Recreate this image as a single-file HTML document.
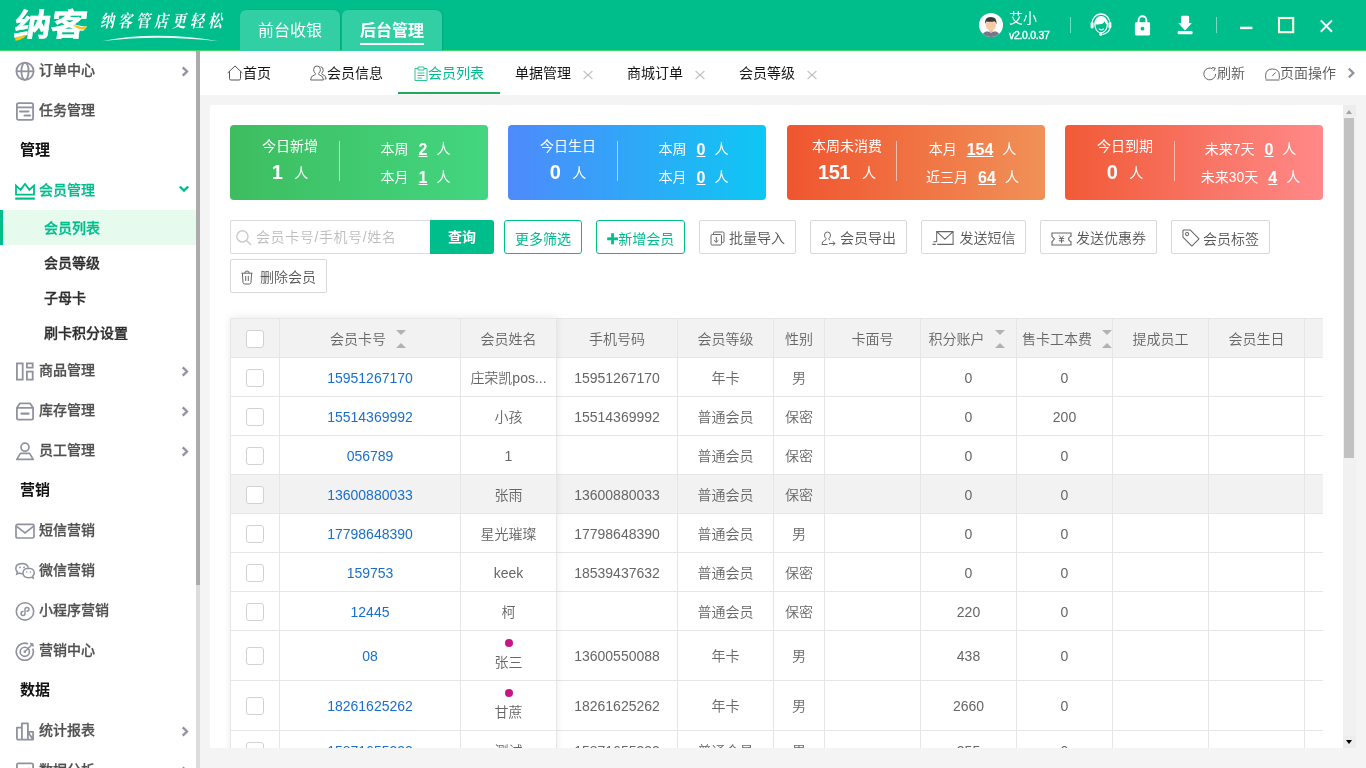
<!DOCTYPE html>
<html lang="zh-CN">
<head>
<meta charset="utf-8">
<title>纳客 - 会员列表</title>
<style>
*{box-sizing:border-box;margin:0;padding:0}
body{will-change:transform}
html,body{width:1366px;height:768px;overflow:hidden;background:#f4f4f4;font-family:"Liberation Sans","Noto Sans CJK SC",sans-serif;font-size:14px;color:#333;font-weight:350}
body{position:relative}
svg{display:block}
/* ---------- header ---------- */
#hd{z-index:5;position:absolute;left:0;top:0;width:1366px;height:51px;background:#00be8c;border-bottom:1px solid #45d86c}
#logo{position:absolute;left:12px;top:7px;font-size:31.5px;font-weight:700;color:#fff;letter-spacing:-.5px;line-height:36px;font-family:"Liberation Sans","Noto Sans CJK SC",sans-serif;transform-origin:0 100%;transform:skewX(-8deg) scaleX(1.17);white-space:nowrap;-webkit-text-stroke:.5px #fff}
#slogan{position:absolute;left:101px;top:10px;font-size:14px;color:#fff;font-family:"Liberation Serif","Noto Serif CJK SC",serif;letter-spacing:4px;line-height:24px;font-weight:700;white-space:nowrap;transform-origin:0 50%;transform:skewX(-12deg) scaleY(1.22)}
.htab{position:absolute;top:10px;height:41px;width:100px;background:#32cfa4;border-radius:6px 6px 0 0;color:#fff;font-size:16px;text-align:center;line-height:42px;font-weight:400;box-shadow:1px 0 2px rgba(0,0,0,.12)}
.htab.on{font-weight:bold}
.htab.on i{position:absolute;left:18px;right:18px;bottom:6px;height:2px;background:#fff}
#uname{position:absolute;left:1009px;top:9px;color:#fff;font-size:14px;line-height:18px;font-weight:400}
#uver{position:absolute;left:1009px;top:29px;color:#fff;font-size:10.5px;line-height:12px;letter-spacing:-.3px;font-weight:400;-webkit-text-stroke:.35px #fff}
.vsep{position:absolute;top:17px;width:1px;height:16px;background:rgba(255,255,255,.45)}
/* ---------- sidebar ---------- */
#sb{position:absolute;left:0;top:50px;width:196px;height:718px;background:#fff;overflow:hidden}
#sbbar{position:absolute;left:196px;top:51px;width:4px;height:717px;background:#dcdcdc}
#sbbar i{position:absolute;left:0;top:0;width:4px;height:534px;background:#ababab}
.mi{position:relative;height:40px;line-height:40px;padding-left:39px;font-weight:500;color:#505050;font-size:14px;-webkit-text-stroke:.25px}
.mi svg{position:absolute;left:15px;top:11px}
.mi .arr{position:absolute;left:auto;right:7px;top:16px}
.mi.on{color:#00be8c}
.sec{height:40px;line-height:40px;padding-left:20px;font-weight:bold;color:#111;font-size:15px}
.smi{height:35px;line-height:37px;padding-left:44px;font-weight:500;-webkit-text-stroke:.3px;color:#2e2e2e;font-size:14px;position:relative}
.smi.on{color:#00be8c;background:#e6fbee}
.smi.on:before{content:"";position:absolute;left:0;top:0;width:3px;height:100%;background:#00be8c}
/* ---------- page tabs ---------- */
#tb{position:absolute;left:200px;top:51px;width:1166px;height:44px;background:#fff}
.pt{position:absolute;top:0;height:44px;line-height:45px;font-size:14px;color:#151515;white-space:nowrap;font-weight:400}
.pt svg{display:inline-block;vertical-align:-2.5px}
.pt.on{color:#00be8c}
.pt.gr{color:#555;font-weight:350}
.pt .xx{margin-left:12px;vertical-align:-2px}
#tbline{position:absolute;left:198px;top:41px;width:102px;height:2px;background:#1fa95c}
/* ---------- main ---------- */
#pn{position:absolute;left:210px;top:105px;width:1133px;height:643px;background:#fff;border-radius:2px 0 0 2px;overflow:hidden}
#vs{position:absolute;left:1343px;top:105px;width:13px;height:643px;background:#f1f1f1}
#vs i{position:absolute;left:1px;top:13px;width:10px;height:340px;background:#c1c1c1}
#vs b{position:absolute;left:0;width:13px;height:12px;background:#ededed}
#vs b:after{content:"";position:absolute;left:3px;border:3.5px solid transparent}
#vs b.u{top:0}
#vs b.u:after{top:1.5px;border-bottom:4px solid #a3a3a3;border-top-width:0;top:5px}
#vs b.d{bottom:0}
#vs b.d:after{top:4px;border-top:4.5px solid #000;border-bottom-width:0}
.card{position:absolute;top:20px;width:258px;height:75px;border-radius:4px;color:#fff;font-weight:400}
.card .l{position:absolute;left:0;top:0;width:110px;text-align:center}
.card .l .t{position:absolute;left:0;top:11px;width:120px;font-size:14px;line-height:20px}
.card .l .n{position:absolute;left:0;top:34px;width:120px;font-size:14px;line-height:26px;white-space:nowrap}
.card .l .n b{font-size:20px;margin-right:12px;vertical-align:-1px;letter-spacing:-.5px}
.card .sp{position:absolute;left:109px;top:16px;width:1px;height:40px;background:rgba(255,255,255,.55)}
.card .r{position:absolute;left:111.5px;top:1px;width:148px;text-align:center;font-size:14px}
.card .r div{position:absolute;left:0;width:148px;line-height:20px;white-space:nowrap}
.card .r b{font-size:16px;text-decoration:underline;margin:0 9px 0 10px;vertical-align:-.5px}
/* toolbar */
.btn{position:absolute;height:34px;border:1px solid #d9d9d9;border-radius:2px;background:#fff;color:#555;font-size:14px;line-height:35px;white-space:nowrap;text-align:center}
.btn svg{display:inline-block;vertical-align:-3px;margin-right:4px}
.btn.g{border-color:#00be8c;color:#00be8c;border-radius:3px;font-weight:400;line-height:36px}
#sch{position:absolute;left:20px;top:115px;width:201px;height:34px;border:1px solid #dcdcdc;border-right:0;border-radius:2px 0 0 2px;background:#fff;color:#bdbdbd;font-size:14px;line-height:32px}
#sch svg{position:absolute;left:4px;top:8px}
#sch span{position:absolute;left:25px;top:0;white-space:nowrap;letter-spacing:.6px}
#qry{position:absolute;left:220px;top:115px;width:64px;height:34px;background:#00be8c;color:#fff;font-weight:bold;font-size:14px;text-align:center;line-height:35px;border-radius:0 3px 3px 0}
.plus{font-size:20px;line-height:1;vertical-align:-2px;font-weight:bold;-webkit-text-stroke:.7px #00be8c}
/* table */
#tbl{position:absolute;left:20px;top:213px;width:1093px;height:430px;overflow:hidden;border-left:1px solid #e6e6e6;border-top:1px solid #e6e6e6}
.tr{position:relative;height:39px;border-bottom:1px solid #e6e6e6;white-space:nowrap;width:1200px;background:#fff}
.tr.h{background:#f2f2f2}
.tr.hv{background:#f2f2f2}
.tr.t2{height:50px}
.td{position:absolute;top:0;height:100%;border-right:1px solid #e6e6e6;text-align:center;line-height:40px;color:#666;font-size:14px;overflow:hidden}
.tr.t2 .td{line-height:51px}
.td a{color:#1b6fcc;text-decoration:none}
.cb{position:absolute;left:15px;top:11px;width:18px;height:18px;border:1px solid #d2d2d2;border-radius:3px;background:#fff}
.tr.t2 .cb{top:16px}
.srt{display:inline-block;position:relative;width:10px;height:20px;margin-left:10px;vertical-align:-5px}
.srt:before{content:"";position:absolute;left:0;top:1px;border:5px solid transparent;border-top-color:#b2b2b2;border-bottom-width:0}
.srt:after{content:"";position:absolute;left:0;top:14px;border:5px solid transparent;border-bottom-color:#b2b2b2;border-top-width:0}
.nm2{position:absolute;left:0;top:21px;width:100%;line-height:20px}
#fxs{position:absolute;left:20px;top:213px;width:327px;height:440px;box-shadow:0 -1px 8px rgba(0,0,0,.08);pointer-events:none}
.dot{position:absolute;left:50%;margin-left:-4px;top:8px;width:8px;height:8px;border-radius:50%;background:#c71585}
</style>
</head>
<body>
<!-- HEADER -->
<div id="hd">
  <div id="logo">纳客</div>
  <div id="slogan">纳客管店更轻松</div>
  <div class="htab" style="left:240px">前台收银</div>
  <div class="htab on" style="left:342px">后台管理<i></i></div>

  <svg id="logoacc" style="position:absolute;left:12px;top:7px" width="80" height="38" viewBox="0 0 80 38"><path d="M3 30.5Q7 30.5 13.6 27.6L12.4 30.6Q7.6 33.6 3.6 33.8Z" fill="#ffc20e"/><path d="M60.6 18.2Q65 17.8 69.4 20.2L74 19L73.4 22.6Q68 23.4 60.6 18.2Z" fill="#ffc20e"/></svg>
  <svg id="swoosh" style="position:absolute;left:100px;top:33px" width="130" height="10" viewBox="0 0 130 10"><path d="M2.5 8Q55 -2.6 119 8.2Q58 1.2 2.5 8Z" fill="#fff" opacity=".95"/></svg>
  <svg style="position:absolute;left:979px;top:13px" width="24" height="24" viewBox="0 0 24 24"><defs><clipPath id="avc"><circle cx="12" cy="12" r="12"/></clipPath></defs><circle cx="12" cy="12" r="12" fill="#fff"/><g clip-path="url(#avc)"><path d="M3.2 24Q3.4 19 8 18.2L12 19.4L16 18.2Q20.6 19 20.8 24Z" fill="#77778b"/><path d="M10 16H14V18.6L12 19.8L10 18.6Z" fill="#f2bd97"/><ellipse cx="11.9" cy="11.8" rx="5" ry="5.9" fill="#f7caa6"/><path d="M6.3 11.4Q5.4 6.6 8.4 4.8Q11 3.2 14.6 4.4Q17.8 5.4 17.5 11.4Q16.8 9.2 15.6 8.2Q11.4 9.4 7.4 8.4Q6.6 9.4 6.3 11.4Z" fill="#3a3a3c"/></g></svg>
  <svg style="position:absolute;left:1089px;top:12px" width="24" height="26" viewBox="0 0 24 26" fill="none" stroke="#fff"><path d="M2.7 12.8A9.3 10.8 0 0 1 21.3 12.8" stroke-width="1.3"/><rect x="1.6" y="10.2" width="3" height="6.2" rx="1.3" fill="#fff" stroke="none"/><rect x="19.4" y="10.2" width="3" height="6.2" rx="1.3" fill="#fff" stroke="none"/><path d="M5.2 12A6.9 7.9 0 0 1 19 12C19 17 16 21.3 12.1 21.3C8.2 21.3 5.2 17 5.2 12Z" fill="#fff" stroke="none"/><path d="M6.5 12.4Q9.5 13 13.2 11.8Q14.6 11.2 15.4 9.2Q16.4 11.6 17.7 12.8C17.7 16.8 15.4 20.2 12.1 20.2C8.8 20.2 6.5 16.8 6.5 12.4Z" fill="#00be8c" stroke="none"/><path d="M10.3 17.1Q12.3 18.6 14.5 17.1" stroke-width="1.2" stroke-linecap="round"/><path d="M21 16.2Q19.8 21.2 13.6 22.4" stroke-width="1.2"/><circle cx="11.7" cy="22.3" r="1.6" fill="#fff" stroke="none"/></svg>
  <svg style="position:absolute;left:1133px;top:14px" width="19" height="23" viewBox="0 0 19 23"><path d="M5.6 9V6.2A3.9 3.9 0 0 1 13.4 6.2V9" fill="none" stroke="#fff" stroke-width="1.9"/><path d="M3.2 8.3H15.8Q17.1 8.3 17.1 9.6V20.1Q17.1 21.4 15.8 21.4H3.2Q1.9 21.4 1.9 20.1V9.6Q1.9 8.3 3.2 8.3ZM9.5 12.8A1.9 1.9 0 1 0 9.5 16.6A1.9 1.9 0 1 0 9.5 12.8Z" fill="#fff" fill-rule="evenodd"/></svg>
  <svg style="position:absolute;left:1176px;top:14px" width="18" height="22" viewBox="0 0 18 22" fill="#fff"><path d="M5.1 3Q5.1 1.8 6.3 1.8H11.9Q13.1 1.8 13.1 3V9.1H15.9L9.1 16.6L2.2 9.1H5.1Z"/><rect x="1.6" y="17" width="15" height="3.3" rx="1.2"/></svg>
  <svg style="position:absolute;left:1238px;top:16px" width="100" height="20" viewBox="0 0 100 20"><rect x="2" y="10.7" width="12.4" height="2.4" fill="#fff"/><rect x="41" y="2" width="14.2" height="14.2" fill="none" stroke="#ffffe0" stroke-width="2.1"/><path d="M82.8 4.4L94 15.8M94 4.4L82.8 15.8" stroke="#fff" stroke-width="2" fill="none"/></svg>
  <div id="uname">艾小</div>
  <div id="uver">v2.0.0.37</div>
  <div class="vsep" style="left:1070px"></div>
  <div class="vsep" style="left:1216px"></div>
</div>
<!-- SIDEBAR -->
<div id="sb">
  <div class="mi"><svg width="20" height="20" viewBox="0 0 20 20" fill="none" stroke="#9192a0" stroke-width="1.8"><circle cx="10" cy="10.3" r="8.6"/><ellipse cx="10" cy="10.3" rx="3.6" ry="8.6"/><path d="M1.4 10.3H18.6"/></svg><svg class="arr" width="8" height="11" viewBox="0 0 8 11" fill="none" stroke="#9192a0" stroke-width="2.3"><path d="M1.7 1.4L6 5.5L1.7 9.6"/></svg>订单中心</div>
  <div class="mi"><svg width="20" height="20" viewBox="0 0 20 20" fill="none" stroke="#9192a0" stroke-width="1.8"><rect x="1.9" y="2.2" width="16.2" height="16.6" rx="1.6"/><path d="M1.9 6.4H18.1"/><path d="M5 10.6H13.5M9.5 14.6H15" stroke-width="2" stroke-linecap="round"/></svg>任务管理</div>
  <div class="sec">管理</div>
  <div class="mi on"><svg width="20" height="20" viewBox="0 0 20 20" fill="none" stroke="#00be8c" stroke-width="1.8"><path d="M1 4.6L5.6 8.8L10 3L14.4 8.8L19 4.6V13.6H1Z" stroke-linejoin="miter"/><path d="M0.2 17.6H19.8" stroke-width="2.2"/></svg><svg class="arr" style="right:6px;top:15px" width="12" height="8" viewBox="0 0 12 8" fill="none" stroke="#00be8c" stroke-width="2.4"><path d="M1.8 1.5L6 5.6L10.2 1.5"/></svg>会员管理</div>
  <div class="smi on">会员列表</div>
  <div class="smi">会员等级</div>
  <div class="smi">子母卡</div>
  <div class="smi">刷卡积分设置</div>
  <div class="mi"><svg width="20" height="20" viewBox="0 0 20 20" fill="none" stroke="#9192a0" stroke-width="1.8"><rect x="1.9" y="2.4" width="5.8" height="16.2"/><rect x="11.9" y="2.4" width="5.8" height="4.2"/><rect x="11.9" y="10.6" width="5.8" height="8"/></svg><svg class="arr" width="8" height="11" viewBox="0 0 8 11" fill="none" stroke="#9192a0" stroke-width="2.3"><path d="M1.7 1.4L6 5.5L1.7 9.6"/></svg>商品管理</div>
  <div class="mi"><svg width="20" height="20" viewBox="0 0 20 20" fill="none" stroke="#9192a0" stroke-width="1.8"><path d="M5 2.3H15L18.1 6.8V17Q18.1 18.6 16.5 18.6H3.5Q1.9 18.6 1.9 17V6.8ZM1.9 6.8H18.1" stroke-linejoin="round"/><path d="M6.4 12.6H13.6" stroke-width="2.2" stroke-linecap="round"/></svg><svg class="arr" width="8" height="11" viewBox="0 0 8 11" fill="none" stroke="#9192a0" stroke-width="2.3"><path d="M1.7 1.4L6 5.5L1.7 9.6"/></svg>库存管理</div>
  <div class="mi"><svg width="20" height="20" viewBox="0 0 20 20" fill="none" stroke="#9192a0" stroke-width="1.7"><circle cx="10" cy="6.2" r="4"/><path d="M5.4 12.4H14.6L18.2 18.4H1.8Z" stroke-linejoin="round"/></svg><svg class="arr" width="8" height="11" viewBox="0 0 8 11" fill="none" stroke="#9192a0" stroke-width="2.3"><path d="M1.7 1.4L6 5.5L1.7 9.6"/></svg>员工管理</div>
  <div class="sec">营销</div>
  <div class="mi"><svg width="20" height="20" viewBox="0 0 20 20" fill="none" stroke="#9192a0" stroke-width="1.7"><rect x="1" y="3.4" width="18" height="13.6" rx="1.6"/><path d="M1.6 5.4L10 12L18.4 5.4"/></svg>短信营销</div>
  <div class="mi"><svg width="20" height="20" viewBox="0 0 20 20" fill="none" stroke="#9192a0" stroke-width="1.8"><path d="M8 12.6Q5.6 12.8 4.2 12L1.8 13.2L2.4 10.8Q0.8 9.2 0.8 7.4Q0.8 3 7 2.6Q12.4 2.8 13.2 6.6" stroke-width="1.5"/><path d="M13.6 7.2Q19.2 7.4 19.2 12Q19.2 13.8 17.8 15L18.2 17L16.2 16.2Q15 16.8 13.6 16.8Q8 16.6 8 12Q8 7.4 13.6 7.2Z" stroke-width="1.5"/><circle cx="5" cy="6.4" r=".9" fill="#9192a0" stroke="none"/><circle cx="9" cy="6.4" r=".9" fill="#9192a0" stroke="none"/><circle cx="11.8" cy="11" r=".8" fill="#9192a0" stroke="none"/><circle cx="15.4" cy="11" r=".8" fill="#9192a0" stroke="none"/></svg>微信营销</div>
  <div class="mi"><svg width="20" height="20" viewBox="0 0 20 20" fill="none" stroke="#9192a0" stroke-width="1.8"><circle cx="10" cy="10.4" r="8.7" stroke-width="1.6"/><path d="M10 12.4Q10 14.4 8 14.4Q6 14.4 6 12.6Q6 10.8 8 10.6M10 12.4V8.4Q10 6.4 12 6.4Q14 6.4 14 8.2Q14 10 12 10.2" stroke-width="1.5" stroke-linecap="round"/></svg>小程序营销</div>
  <div class="mi"><svg width="20" height="20" viewBox="0 0 20 20" fill="none" stroke="#9192a0" stroke-width="1.7"><path d="M17.6 7.6Q18.4 9 18.4 10.8A8.6 8.6 0 1 1 9.8 2.2Q11.6 2.2 13 3"/><circle cx="9.8" cy="10.8" r="4.6" stroke-width="1.6"/><circle cx="9.8" cy="10.8" r="1.3" fill="#9192a0" stroke="none"/><path d="M9.8 10.8L17.4 3.2M15 2.4L17.6 3L18.2 5.6" stroke-width="1.5"/></svg>营销中心</div>
  <div class="sec">数据</div>
  <div class="mi"><svg width="20" height="20" viewBox="0 0 20 20" fill="none" stroke="#9192a0" stroke-width="1.8"><path d="M1.9 18.6V6.6H6.9M6.9 18.6V2.4H12.9V18.6M12.9 10.9H18.1V18.6ZM1.9 18.6H18.1" stroke-linejoin="round"/></svg><svg class="arr" width="8" height="11" viewBox="0 0 8 11" fill="none" stroke="#9192a0" stroke-width="2.3"><path d="M1.7 1.4L6 5.5L1.7 9.6"/></svg>统计报表</div>
  <div class="mi"><svg width="20" height="20" viewBox="0 0 20 20" fill="none" stroke="#9192a0" stroke-width="1.8"><rect x="1.9" y="2.4" width="16.2" height="14" rx="1.4"/><path d="M5.6 12L8.6 8.6L11.4 11L14.6 7"/></svg><svg class="arr" width="8" height="11" viewBox="0 0 8 11" fill="none" stroke="#9192a0" stroke-width="2.3"><path d="M1.7 1.4L6 5.5L1.7 9.6"/></svg>数据分析</div>
</div>
<div id="sbbar"><i></i></div>
<!-- PAGE TABS -->
<div id="tb">
  <div class="pt" style="left:27px"><svg width="16" height="16" viewBox="0 0 16 16" fill="none" stroke="#555" stroke-width="1"><path d="M0.6 8L8 1L15.4 8M2.5 6.4V13.6Q2.5 15 3.9 15H12.1Q13.5 15 13.5 13.6V6.4"/></svg>首页</div>
  <div class="pt" style="left:110px"><svg width="17" height="16" viewBox="0 0 17 16" fill="none" stroke="#666" stroke-width="1"><path d="M5.6 8.6Q3.6 7.2 3.6 4.6Q3.6 1 7 1Q10.4 1 10.4 4.6Q10.4 7.2 8.4 8.6Q8.4 9.8 10 10.2Q13.4 11 13.4 15H0.6Q0.6 11 4 10.2Q5.6 9.8 5.6 8.6Z"/><path d="M10.6 1.6Q13.4 2 13.2 5.4Q13 7.4 11.6 8.4Q11.8 9.4 13 9.8Q16 10.6 16.2 14H14.6"/></svg>会员信息</div>
  <div class="pt on" style="left:214px"><svg width="14" height="15" viewBox="0 0 14 15" fill="none" stroke="#2fc592" stroke-width="1"><path d="M4 2.5H1V14.5H13V2.5H10M4 1H10V4H4ZM3.5 7H10.5M3.5 9.5H10.5M3.5 12H8"/></svg>会员列表</div>
  <div class="pt" style="left:315px">单据管理<svg class="xx" width="10" height="10" viewBox="0 0 10 10" fill="none" stroke="#c2c2c2" stroke-width="1.1"><path d="M0.6 1L9.4 9M9.4 1L0.6 9"/></svg></div>
  <div class="pt" style="left:427px">商城订单<svg class="xx" width="10" height="10" viewBox="0 0 10 10" fill="none" stroke="#c2c2c2" stroke-width="1.1"><path d="M0.6 1L9.4 9M9.4 1L0.6 9"/></svg></div>
  <div class="pt" style="left:539px">会员等级<svg class="xx" width="10" height="10" viewBox="0 0 10 10" fill="none" stroke="#c2c2c2" stroke-width="1.1"><path d="M0.6 1L9.4 9M9.4 1L0.6 9"/></svg></div>
  <div class="pt gr" style="left:1003px"><svg width="14" height="14" viewBox="0 0 14 14" fill="none" stroke="#666" stroke-width="1"><path d="M12.6 7A5.9 5.9 0 1 1 9.6 1.8M9.2 0.4L12.4 1.2L10.6 4"/></svg>刷新</div>
  <div class="pt gr" style="left:1065px"><svg width="15" height="13" viewBox="0 0 15 13" fill="none" stroke="#666" stroke-width="1"><path d="M1 11.2Q0.6 10 0.6 7.8Q0.6 1 7.5 1Q14.4 1 14.4 7.8Q14.4 10 14 11.2M0.6 12H14.4" /><path d="M7.2 8.2L10.6 4.4"/></svg>页面操作</div><div class="pt" style="left:1147px;top:16px;line-height:0"><svg width="9" height="12" viewBox="0 0 9 12" fill="none" stroke="#9192a0" stroke-width="2.2"><path d="M1.8 1.6L6.4 6L1.8 10.4"/></svg></div>
  <div id="tbline"></div>
</div>
<!-- MAIN PANEL -->
<div id="pn">
  <div id="cards">
<div class="card" style="left:20px;background:linear-gradient(90deg,#3ebd60,#43d680)"><div class="l"><div class="t">今日新增</div><div class="n"><b>1</b>人</div></div><div class="sp"></div><div class="r"><div style="top:13px">本周<b>2</b>人</div><div style="top:41px">本月<b>1</b>人</div></div></div>
<div class="card" style="left:298px;background:linear-gradient(90deg,#4e8afc,#0ec7f3)"><div class="l"><div class="t">今日生日</div><div class="n"><b>0</b>人</div></div><div class="sp"></div><div class="r"><div style="top:13px">本周<b>0</b>人</div><div style="top:41px">本月<b>0</b>人</div></div></div>
<div class="card" style="left:577px;background:linear-gradient(90deg,#f0552f,#f09158)"><div class="l"><div class="t">本周未消费</div><div class="n"><b>151</b>人</div></div><div class="sp"></div><div class="r"><div style="top:13px">本月<b>154</b>人</div><div style="top:41px">近三月<b>64</b>人</div></div></div>
<div class="card" style="left:855px;background:linear-gradient(90deg,#f15a36,#ff8989)"><div class="l"><div class="t">今日到期</div><div class="n"><b>0</b>人</div></div><div class="sp"></div><div class="r"><div style="top:13px">未来7天<b>0</b>人</div><div style="top:41px">未来30天<b>4</b>人</div></div></div>
</div><!--/cards-->
  <div id="tools">
  <div id="sch"><svg width="18" height="18" viewBox="0 0 18 18" fill="none" stroke="#c9c9c9" stroke-width="1.4"><circle cx="7.4" cy="7.4" r="5.6"/><path d="M11.4 11.4L15.6 15.6" stroke-linecap="round"/></svg><span>会员卡号/手机号/姓名</span></div>
  <div id="qry">查询</div>
  <div class="btn g" style="left:294px;top:115px;width:78px">更多筛选</div>
  <div class="btn g" style="left:386px;top:115px;width:89px"><b class="plus">+</b>新增会员</div>
  <div class="btn" style="left:489px;top:115px;width:97px"><svg width="15" height="15" viewBox="0 0 15 15" fill="none" stroke="#666" stroke-width="1"><path d="M3.5 3.5V2.2Q3.5 1 4.7 1H12.8Q14 1 14 2.2V10.3Q14 11.5 12.8 11.5H11.5"/><rect x="1" y="3.5" width="10.5" height="10.5" rx="1.2"/><path d="M6.25 6V11.2M4 9.2L6.25 11.4L8.5 9.2"/></svg>批量导入</div>
  <div class="btn" style="left:600px;top:115px;width:97px"><svg width="15" height="15" viewBox="0 0 15 15" fill="none" stroke="#666" stroke-width="1"><path d="M5.2 7.6Q3.5 6.4 3.5 4.2Q3.5 1 6.5 1Q9.5 1 9.5 4.2Q9.5 6.4 7.8 7.6Q7.6 8.6 9 9M5.2 7.6Q5.4 8.8 3.6 9.4Q1 10.3 1 13.5H6.5"/><path d="M8 12.5H14M11.8 10.3L14 12.5L11.8 14.7"/></svg>会员导出</div>
  <div class="btn" style="left:711px;top:115px;width:105px"><svg width="22.5" height="16" viewBox="0 0 24 15" preserveAspectRatio="none" fill="none" stroke="#666" stroke-width="1.1" style="margin-right:5.5px"><path d="M5 11V1.5H22.5V13.5H5.5M5 1.5L13.75 8.6L22.5 1.5M1.5 11H5M0.5 13.5H4"/></svg>发送短信</div>
  <div class="btn" style="left:830px;top:115px;width:117px"><svg width="21" height="14" viewBox="0 0 21 14" fill="none" stroke="#666" stroke-width="1.1"><path d="M1 1H20V4.3Q17.6 5 17.6 7Q17.6 9 20 9.7V13H1V9.7L3.4 7L1 4.3Z"/><path d="M8.3 3.6L10.5 6.4L12.7 3.6M7.8 6.6H13.2M7.8 8.8H13.2M10.5 6.4V11" stroke-width="1"/></svg>发送优惠券</div>
  <div class="btn" style="left:961px;top:115px;width:99px;line-height:37px"><svg width="18" height="18" viewBox="0 0 19 19" fill="none" stroke="#666" stroke-width="1.1" style="vertical-align:-3px;margin-right:3px"><path d="M1 2.2Q1 1 2.2 1H8.6L18 10.4L10.4 18L1 8.6Z" stroke-linejoin="round"/><circle cx="5.4" cy="5.4" r="1.7"/></svg>会员标签</div>
  <div class="btn" style="left:20px;top:154px;width:97px"><svg width="12" height="15" viewBox="0 0 12 15" fill="none" stroke="#666" stroke-width="1" style="margin-right:7px"><path d="M0.5 3.2H11.5M3.8 3.2Q3.8 1 6 1Q8.2 1 8.2 3.2M1.4 3.2L2 12.4Q2.2 14 3.8 14H8.2Q9.8 14 10 12.4L10.6 3.2M4.7 6V11M7.3 6V11"/></svg>删除会员</div>
</div>
  <div id="tbl">
<div class="tr h"><div class="td" style="left:0px;width:49px"><span class="cb"></span></div><div class="td" style="left:49px;width:181px;padding-right:4px">会员卡号<i class="srt"></i></div><div class="td" style="left:230px;width:96px">会员姓名</div><div class="td" style="left:326px;width:121px">手机号码</div><div class="td" style="left:447px;width:96px">会员等级</div><div class="td" style="left:543px;width:51px">性别</div><div class="td" style="left:594px;width:96px">卡面号</div><div class="td" style="left:690px;width:96px;padding-right:4px">积分账户<i class="srt"></i></div><div class="td" style="left:786px;width:96px;text-align:left;padding-left:5px">售卡工本费<i class="srt"></i></div><div class="td" style="left:882px;width:96px">提成员工</div><div class="td" style="left:978px;width:96px">会员生日</div><div class="td" style="left:1074px;width:96px"></div></div>
<div class="tr"><div class="td" style="left:0px;width:49px"><span class="cb"></span></div><div class="td" style="left:49px;width:181px"><a>15951267170</a></div><div class="td" style="left:230px;width:96px">庄荣凯pos...</div><div class="td" style="left:326px;width:121px">15951267170</div><div class="td" style="left:447px;width:96px">年卡</div><div class="td" style="left:543px;width:51px">男</div><div class="td" style="left:594px;width:96px"></div><div class="td" style="left:690px;width:96px">0</div><div class="td" style="left:786px;width:96px">0</div><div class="td" style="left:882px;width:96px"></div><div class="td" style="left:978px;width:96px"></div><div class="td" style="left:1074px;width:96px"></div></div>
<div class="tr"><div class="td" style="left:0px;width:49px"><span class="cb"></span></div><div class="td" style="left:49px;width:181px"><a>15514369992</a></div><div class="td" style="left:230px;width:96px">小孩</div><div class="td" style="left:326px;width:121px">15514369992</div><div class="td" style="left:447px;width:96px">普通会员</div><div class="td" style="left:543px;width:51px">保密</div><div class="td" style="left:594px;width:96px"></div><div class="td" style="left:690px;width:96px">0</div><div class="td" style="left:786px;width:96px">200</div><div class="td" style="left:882px;width:96px"></div><div class="td" style="left:978px;width:96px"></div><div class="td" style="left:1074px;width:96px"></div></div>
<div class="tr"><div class="td" style="left:0px;width:49px"><span class="cb"></span></div><div class="td" style="left:49px;width:181px"><a>056789</a></div><div class="td" style="left:230px;width:96px">1</div><div class="td" style="left:326px;width:121px"></div><div class="td" style="left:447px;width:96px">普通会员</div><div class="td" style="left:543px;width:51px">保密</div><div class="td" style="left:594px;width:96px"></div><div class="td" style="left:690px;width:96px">0</div><div class="td" style="left:786px;width:96px">0</div><div class="td" style="left:882px;width:96px"></div><div class="td" style="left:978px;width:96px"></div><div class="td" style="left:1074px;width:96px"></div></div>
<div class="tr hv"><div class="td" style="left:0px;width:49px"><span class="cb"></span></div><div class="td" style="left:49px;width:181px"><a>13600880033</a></div><div class="td" style="left:230px;width:96px">张雨</div><div class="td" style="left:326px;width:121px">13600880033</div><div class="td" style="left:447px;width:96px">普通会员</div><div class="td" style="left:543px;width:51px">保密</div><div class="td" style="left:594px;width:96px"></div><div class="td" style="left:690px;width:96px">0</div><div class="td" style="left:786px;width:96px">0</div><div class="td" style="left:882px;width:96px"></div><div class="td" style="left:978px;width:96px"></div><div class="td" style="left:1074px;width:96px"></div></div>
<div class="tr"><div class="td" style="left:0px;width:49px"><span class="cb"></span></div><div class="td" style="left:49px;width:181px"><a>17798648390</a></div><div class="td" style="left:230px;width:96px">星光璀璨</div><div class="td" style="left:326px;width:121px">17798648390</div><div class="td" style="left:447px;width:96px">普通会员</div><div class="td" style="left:543px;width:51px">男</div><div class="td" style="left:594px;width:96px"></div><div class="td" style="left:690px;width:96px">0</div><div class="td" style="left:786px;width:96px">0</div><div class="td" style="left:882px;width:96px"></div><div class="td" style="left:978px;width:96px"></div><div class="td" style="left:1074px;width:96px"></div></div>
<div class="tr"><div class="td" style="left:0px;width:49px"><span class="cb"></span></div><div class="td" style="left:49px;width:181px"><a>159753</a></div><div class="td" style="left:230px;width:96px">keek</div><div class="td" style="left:326px;width:121px">18539437632</div><div class="td" style="left:447px;width:96px">普通会员</div><div class="td" style="left:543px;width:51px">保密</div><div class="td" style="left:594px;width:96px"></div><div class="td" style="left:690px;width:96px">0</div><div class="td" style="left:786px;width:96px">0</div><div class="td" style="left:882px;width:96px"></div><div class="td" style="left:978px;width:96px"></div><div class="td" style="left:1074px;width:96px"></div></div>
<div class="tr"><div class="td" style="left:0px;width:49px"><span class="cb"></span></div><div class="td" style="left:49px;width:181px"><a>12445</a></div><div class="td" style="left:230px;width:96px">柯</div><div class="td" style="left:326px;width:121px"></div><div class="td" style="left:447px;width:96px">普通会员</div><div class="td" style="left:543px;width:51px">保密</div><div class="td" style="left:594px;width:96px"></div><div class="td" style="left:690px;width:96px">220</div><div class="td" style="left:786px;width:96px">0</div><div class="td" style="left:882px;width:96px"></div><div class="td" style="left:978px;width:96px"></div><div class="td" style="left:1074px;width:96px"></div></div>
<div class="tr t2"><div class="td" style="left:0px;width:49px"><span class="cb"></span></div><div class="td" style="left:49px;width:181px"><a>08</a></div><div class="td" style="left:230px;width:96px"><span class="dot"></span><span class="nm2">张三</span></div><div class="td" style="left:326px;width:121px">13600550088</div><div class="td" style="left:447px;width:96px">年卡</div><div class="td" style="left:543px;width:51px">男</div><div class="td" style="left:594px;width:96px"></div><div class="td" style="left:690px;width:96px">438</div><div class="td" style="left:786px;width:96px">0</div><div class="td" style="left:882px;width:96px"></div><div class="td" style="left:978px;width:96px"></div><div class="td" style="left:1074px;width:96px"></div></div>
<div class="tr t2"><div class="td" style="left:0px;width:49px"><span class="cb"></span></div><div class="td" style="left:49px;width:181px"><a>18261625262</a></div><div class="td" style="left:230px;width:96px"><span class="dot"></span><span class="nm2">甘蔗</span></div><div class="td" style="left:326px;width:121px">18261625262</div><div class="td" style="left:447px;width:96px">年卡</div><div class="td" style="left:543px;width:51px">男</div><div class="td" style="left:594px;width:96px"></div><div class="td" style="left:690px;width:96px">2660</div><div class="td" style="left:786px;width:96px">0</div><div class="td" style="left:882px;width:96px"></div><div class="td" style="left:978px;width:96px"></div><div class="td" style="left:1074px;width:96px"></div></div>
<div class="tr"><div class="td" style="left:0px;width:49px"><span class="cb"></span></div><div class="td" style="left:49px;width:181px"><a>15871655333</a></div><div class="td" style="left:230px;width:96px">测试</div><div class="td" style="left:326px;width:121px">15871655333</div><div class="td" style="left:447px;width:96px">普通会员</div><div class="td" style="left:543px;width:51px">男</div><div class="td" style="left:594px;width:96px"></div><div class="td" style="left:690px;width:96px">355</div><div class="td" style="left:786px;width:96px">0</div><div class="td" style="left:882px;width:96px"></div><div class="td" style="left:978px;width:96px"></div><div class="td" style="left:1074px;width:96px"></div></div>
</div><!--/tbl-->
  <div id="fxs"></div>
</div>
<div id="vs"><b class="u"></b><i></i><b class="d"></b></div>
</body>
</html>
